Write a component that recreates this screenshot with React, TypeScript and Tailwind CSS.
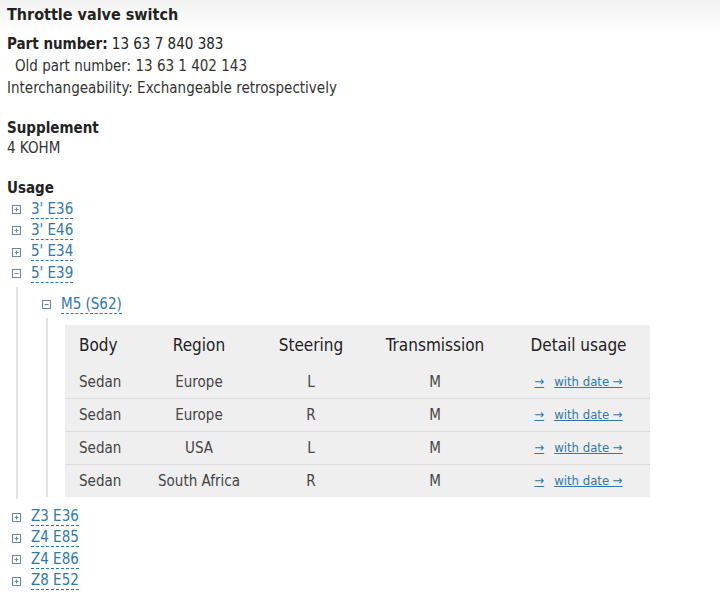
import React from "react";

const font = { fontFamily: '"DejaVu Sans Condensed", "DejaVu Sans", Tahoma, sans-serif' };

function ToggleIcon({ open }: { open?: boolean }) {
  return (
    <svg width="9" height="9" viewBox="0 0 9 9" className="shrink-0">
      <rect x="0.5" y="0.5" width="8" height="8" fill="none" stroke="#6b8a99" />
      <path d="M2.5 4.5h4" stroke="#6b8a99" />
      {!open && <path d="M4.5 2.5v4" stroke="#6b8a99" />}
    </svg>
  );
}

function TreeLink({ label, open }: { label: string; open?: boolean }) {
  return (
    <div className="flex items-center gap-[10px] h-[21.3px]">
      <ToggleIcon open={open} />
      <span className="text-[#3178a8] border-b border-dashed border-[#3178a8] leading-[17px]">{label}</span>
    </div>
  );
}

const rows = [
  ["Sedan", "Europe", "L", "M"],
  ["Sedan", "Europe", "R", "M"],
  ["Sedan", "USA", "L", "M"],
  ["Sedan", "South Africa", "R", "M"],
];

export default function App() {
  return (
    <div className="w-[720px] h-[598px] bg-white overflow-hidden text-[15px] text-[#333]" style={font}>
      <div className="h-[33px] bg-gradient-to-b from-[#f2f2f2] to-white px-[7px] pt-[4px]">
        <h1 className="font-bold text-[16px] text-[#222] leading-[22px]">Throttle valve switch</h1>
      </div>

      <div className="px-[7px] leading-[22px]">
        <div className="text-[#222]">
          <span className="font-semibold">Part number:</span> 13 63 7 840 383
        </div>
        <div className="pl-[8px]">Old part number: 13 63 1 402 143</div>
        <div>Interchangeability: Exchangeable retrospectively</div>

        <div className="mt-[19px] leading-[20px] font-semibold text-[#222]">Supplement</div>
        <div className="leading-[20px]">4 KOHM</div>

        <div className="mt-[20px] leading-[20px] font-semibold text-[#222]">Usage</div>

        <div className="pl-[5px] mt-[1px]">
          <TreeLink label="3' E36" />
          <TreeLink label="3' E46" />
          <TreeLink label="5' E34" />
          <TreeLink label="5' E39" open />

          <div className="ml-[4px] border-l-2 border-[#e3e3e3] mt-[3px] pt-[7px] pb-[2px] pl-[24px]">
            <TreeLink label="M5 (S62)" open />
            <div className="ml-[4px] border-l-2 border-[#e3e3e3] mt-[3px] pt-[7px] pl-[17px]">
              <table className="w-[585px] bg-[#efefef] border-collapse text-[#444]">
                <thead>
                  <tr className="h-[40px] text-[17px] text-[#222]">
                    <th className="font-medium text-left pl-[14px] w-[74px]">Body</th>
                    <th className="font-medium w-[120px]">Region</th>
                    <th className="font-medium w-[104px]">Steering</th>
                    <th className="font-medium w-[144px]">Transmission</th>
                    <th className="font-medium">Detail usage</th>
                  </tr>
                </thead>
                <tbody>
                  {rows.map((r, i) => (
                    <tr key={i} className={`h-[33px] ${i > 0 ? "border-t border-[#dcdcdc]" : ""}`}>
                      <td className="pl-[14px]">{r[0]}</td>
                      <td className="text-center">{r[1]}</td>
                      <td className="text-center">{r[2]}</td>
                      <td className="text-center">{r[3]}</td>
                      <td className="text-center text-[13px] text-[#3178a8]">
                        <span className="underline">→</span>
                        <span className="underline ml-[10px]">with date →</span>
                      </td>
                    </tr>
                  ))}
                </tbody>
              </table>
            </div>
          </div>

          <div className="mt-[7px]">
            <TreeLink label="Z3 E36" />
            <TreeLink label="Z4 E85" />
            <TreeLink label="Z4 E86" />
            <TreeLink label="Z8 E52" />
          </div>
        </div>
      </div>
    </div>
  );
}
